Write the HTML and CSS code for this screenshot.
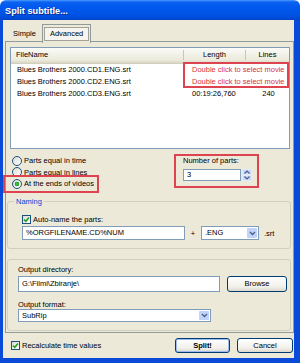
FILE: index.html
```html
<!DOCTYPE html>
<html lang="en">
<head>
    <meta charset="UTF-8">
    <title>Split subtitle...</title>
    <link rel="stylesheet" href="styles.css">
</head>
<body>
    <div class="window">
        <div class="titlebar">Split subtitle...</div>
        <div class="frame">
            <div class="tabs">
                <div class="tab">Simple</div>
                <div class="tab active"><span>Advanced</span></div>
            </div>
            <div class="panel">
                <div class="list">
                    <div class="list-head">
                        <div class="col name">FileName</div>
                        <div class="col">Length</div>
                        <div class="col">Lines</div>
                    </div>
                    <div class="row">
                        <div class="cell name">Blues Brothers 2000.CD1.ENG.srt</div>
                        <div class="cell len warn">Double click to select movie</div>
                        <div class="cell lines"></div>
                    </div>
                    <div class="row">
                        <div class="cell name">Blues Brothers 2000.CD2.ENG.srt</div>
                        <div class="cell len warn">Double click to select movie</div>
                        <div class="cell lines"></div>
                    </div>
                    <div class="row">
                        <div class="cell name">Blues Brothers 2000.CD3.ENG.srt</div>
                        <div class="cell len">00:19:26,760</div>
                        <div class="cell lines">240</div>
                    </div>
                    <div class="note note-list"></div>
                </div>

                <div class="options">
                    <div class="radios">
                        <div class="radio"><span class="dot"></span>Parts equal in time</div>
                        <div class="radio"><span class="dot"></span>Parts equal in lines</div>
                        <div class="radio on"><span class="dot"></span>At the ends of videos</div>
                        <div class="note note-radio"></div>
                    </div>
                    <div class="parts">
                        <div class="label">Number of parts:</div>
                        <div class="spin">
                            <div class="field">3</div>
                            <div class="spin-btns">
                                <div class="spin-btn">
                                    <svg width="6" height="4" viewBox="0 0 6 4"><path d="M0.5 3.5 L3 1 L5.5 3.5" fill="none" stroke="#4d6185" stroke-width="1.2"/></svg>
                                </div>
                                <div class="spin-btn">
                                    <svg width="6" height="4" viewBox="0 0 6 4"><path d="M0.5 0.5 L3 3 L5.5 0.5" fill="none" stroke="#4d6185" stroke-width="1.2"/></svg>
                                </div>
                            </div>
                        </div>
                        <div class="note note-parts"></div>
                    </div>
                </div>

                <fieldset class="group naming">
                    <legend>Naming</legend>
                    <div class="check-row">
                        <span class="check">
                            <svg width="7" height="7" viewBox="0 0 7 7"><path d="M1 3.5 L2.8 5.3 L6 1.5" fill="none" stroke="#21a121" stroke-width="1.6"/></svg>
                        </span>
                        Auto-name the parts:
                    </div>
                    <div class="name-row">
                        <div class="field pattern">%ORGFILENAME.CD%NUM</div>
                        <span class="plus">+</span>
                        <div class="combo lang">
                            <span>.ENG</span>
                            <span class="drop">
                                <svg width="7" height="5" viewBox="0 0 7 5"><path d="M1 1 L3.5 3.5 L6 1" fill="none" stroke="#4d6185" stroke-width="1.4"/></svg>
                            </span>
                        </div>
                        <span class="ext">.srt</span>
                    </div>
                </fieldset>

                <div class="group output">
                    <div class="label">Output directory:</div>
                    <div class="dir-row">
                        <div class="field dir">G:\Filmi\Zbiranje\</div>
                        <div class="button browse">Browse</div>
                    </div>
                    <div class="label format-label">Output format:</div>
                    <div class="combo format">
                        <span>SubRip</span>
                        <span class="drop">
                            <svg width="7" height="5" viewBox="0 0 7 5"><path d="M1 1 L3.5 3.5 L6 1" fill="none" stroke="#4d6185" stroke-width="1.4"/></svg>
                        </span>
                    </div>
                </div>
            </div>

            <div class="footer">
                <span class="check">
                    <svg width="7" height="7" viewBox="0 0 7 7"><path d="M1 3.5 L2.8 5.3 L6 1.5" fill="none" stroke="#21a121" stroke-width="1.6"/></svg>
                </span>
                <span class="recalc">Recalculate time values</span>
                <div class="button split">Split!</div>
                <div class="button cancel">Cancel</div>
            </div>
        </div>
    </div>
</body>
</html>
```

FILE: styles.css
```css
* {
    box-sizing: border-box;
}
body {
    margin: 0;
    background: #fff;
    font-family: "Liberation Sans", Arial, sans-serif;
    font-size: 7.5px;
    color: #000;
}
.window {
    width: 300px;
    height: 363px;
    display: flex;
    flex-direction: column;
}
.titlebar {
    flex: none;
    height: 20px;
    padding: 6px 0 0 5px;
    border-radius: 6px 6px 0 0;
    background: linear-gradient(#4a9cff 0, #0c62f0 2px, #0058ee 7px, #0054e6 14px, #0048d4 19px, #003fbf 20px);
    color: #fff;
    font-weight: bold;
    font-size: 9.2px;
    line-height: 11px;
    text-shadow: 1px 1px #0a2a8a;
}
.frame {
    flex: 1;
    display: flex;
    flex-direction: column;
    padding: 2px 0 0 2px;
    background: #ece9d8;
    border: 0 solid #0a4ad8;
    border-width: 0 6px 5px 3px;
}

/* tabs */
.tabs {
    display: flex;
    height: 20px;
    padding-left: 2px;
    margin-bottom: -1px;
    position: relative;
    z-index: 1;
}
.tab {
    height: 16px;
    margin-top: 4px;
    padding: 0 6px;
    line-height: 15px;
}
.tab.active {
    height: 19px;
    margin-top: 2px;
    padding: 2px 1px 0;
    border: 1px solid #919b9c;
    border-bottom: none;
    background: #ece9d8;
}
.tab.active span {
    display: block;
    height: 14px;
    padding: 0 5px;
    line-height: 12px;
    border: 1px solid #a3a195;
    background: #f5f4ee;
}
.panel {
    flex: none;
    height: 292px;
    border: 1px solid #919b9c;
}

/* list view */
.list {
    position: relative;
    height: 102px;
    margin: 5px 3px 0 4px;
    border: 1px solid #7f9db9;
    background: #fff;
}
.list-head,
.row {
    display: grid;
    grid-template-columns: 173px 62px 1fr;
}
.list-head {
    height: 16px;
    background: linear-gradient(#fbfbf9, #ebeadb 80%, #d9d6c6);
    border-bottom: 1px solid #d2cfbf;
}
.list-head .col {
    text-align: center;
    line-height: 15px;
    border-right: 1px solid #c9c6b6;
    margin: 2px 0 3px;
    line-height: 10px;
}
.list-head .col.name {
    text-align: left;
    padding-left: 5px;
}
.list-head .col:last-child {
    border-right: none;
}
.row {
    height: 12px;
    line-height: 12px;
}
.cell {
    white-space: nowrap;
}
.cell.name {
    padding-left: 6px;
}
.cell.len {
    padding-left: 8px;
}
.cell.lines {
    text-align: center;
    padding-left: 2px;
}
.warn {
    color: #d9303c;
}

/* red annotation frames */
.note {
    position: absolute;
    border: 2px solid #de4450;
}
.note-list {
    left: 172px;
    top: 14px;
    width: 106px;
    height: 26px;
}
.note-radio {
    left: -3px;
    top: 26px;
    width: 96px;
    height: 18px;
}
.note-parts {
    left: -9px;
    top: 5px;
    width: 85px;
    height: 34px;
}

/* split options */
.options {
    display: grid;
    grid-template-columns: 177px 1fr;
    height: 48px;
}
.radios {
    position: relative;
    padding: 6px 0 0 6px;
}
.radio {
    display: flex;
    align-items: center;
    gap: 2px;
    height: 11.5px;
}
.dot {
    width: 10px;
    height: 10px;
    border: 1px solid #1c5180;
    border-radius: 50%;
    background: linear-gradient(135deg, #dcdad0, #fff);
}
.radio.on .dot {
    background: radial-gradient(circle, #4ccf4c 0, #21a121 2px, transparent 2.6px), linear-gradient(135deg, #dcdad0, #fff);
}
.parts {
    position: relative;
    padding-top: 7px;
}
.label {
    line-height: 9px;
}
.spin {
    display: flex;
    gap: 1px;
    margin-top: 4px;
}
.field {
    height: 12px;
    padding-left: 3px;
    line-height: 10px;
    border: 1px solid #7f9db9;
    background: #fff;
    white-space: nowrap;
}
.spin .field {
    width: 58px;
}
.spin-btns {
    display: flex;
    flex-direction: column;
}
.spin-btn {
    display: flex;
    align-items: center;
    justify-content: center;
    width: 10px;
    height: 6px;
    background: #c9d8fa;
    border: 1px solid #e2eafc;
    border-radius: 1px;
}

/* group boxes */
.group {
    border: 1px solid #d0d0bf;
    border-radius: 3px;
    margin: 0 2px 0 1px;
}
fieldset.group {
    min-width: 0;
    padding: 0 0 8px 6px;
}
legend {
    padding: 0 2px;
    line-height: 9px;
    color: #0046d5;
}
.check-row {
    display: flex;
    align-items: center;
    gap: 2px;
    height: 10px;
    margin: 8px 0 0 8px;
}
.check {
    display: flex;
    align-items: center;
    justify-content: center;
    width: 9px;
    height: 9px;
    border: 1px solid #1c5180;
    background: linear-gradient(135deg, #dcdad0, #fff);
}
.name-row {
    display: flex;
    align-items: center;
    height: 14px;
    margin: 2px 0 0 8px;
}
.field.pattern {
    width: 163px;
    height: 14px;
    line-height: 12px;
}
.plus {
    width: 16px;
    text-align: center;
}
.combo {
    display: flex;
    justify-content: space-between;
    border: 1px solid #7f9db9;
    background: #fff;
    padding: 0 1px 0 3px;
}
.combo .drop {
    display: flex;
    align-items: center;
    justify-content: center;
    width: 10px;
    margin: 1px 0;
    background: #c1d3fb;
    border-radius: 1px;
}
.combo.lang {
    width: 58px;
    height: 14px;
    line-height: 12px;
}
.ext {
    margin-left: 5px;
}
.output {
    height: 72px;
    margin-top: 10px;
    padding: 5px 0 0 10px;
}
.dir-row {
    display: flex;
    gap: 7px;
    margin-top: 2px;
}
.field.dir {
    width: 202px;
    height: 16px;
    line-height: 14px;
}
.button {
    height: 16px;
    line-height: 14px;
    text-align: center;
    border: 1px solid #003c74;
    border-radius: 3px;
    background: linear-gradient(#fff, #f1f0ea 70%, #dcd8cd);
}
.button.browse {
    width: 60px;
}
.format-label {
    margin-top: 8px;
}
.combo.format {
    width: 193px;
    height: 13px;
    line-height: 11px;
}

/* bottom bar */
.footer {
    display: flex;
    align-items: center;
    flex: 1;
    padding: 0 1px 0 6px;
}
.footer .check {
    margin-right: 2px;
}
.recalc {
    flex: 1;
}
.footer .button {
    height: 15px;
    line-height: 13px;
}
.button.split {
    width: 55px;
    font-weight: bold;
    box-shadow: inset 0 0 0 1px #9fbcf0;
}
.button.cancel {
    width: 56px;
    margin-left: 7px;
}
```
